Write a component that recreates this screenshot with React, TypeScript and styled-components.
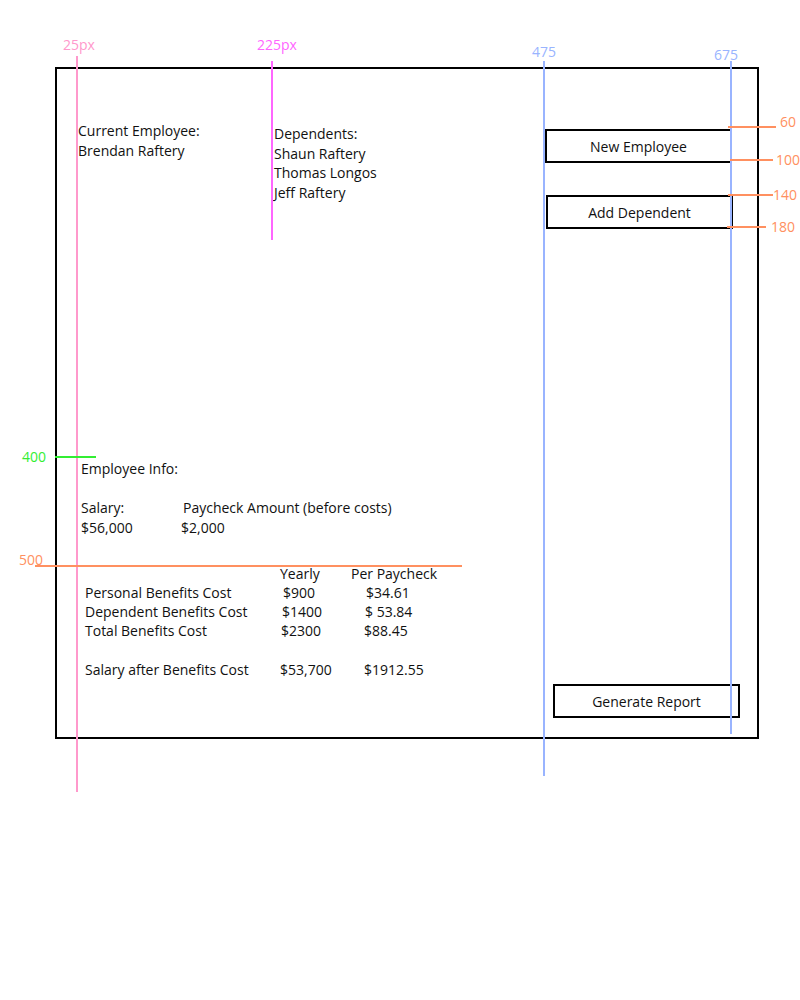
import React from 'react';
import styled, { createGlobalStyle } from 'styled-components';

const GlobalStyle = createGlobalStyle`
  html, body {
    margin: 0;
    padding: 0;
    background: #ffffff;
  }
  body {
    font-family: "Open Sans", "Noto Sans", sans-serif;
    font-size: 14px;
    color: #111111;
  }
`;

const Page = styled.div`
  position: relative;
  width: 800px;
  height: 1000px;
  padding: 67px 0 0 55px;
  box-sizing: border-box;
`;

const Frame = styled.div`
  width: 704px;
  height: 672px;
  box-sizing: border-box;
  border: 2px solid #000;
  display: flex;
`;

const LeftArea = styled.div`
  flex: 1;
  display: flex;
  flex-direction: column;
  line-height: 19.5px;
`;

const TopRow = styled.div`
  display: flex;
  padding: 52px 0 0 21px;
  height: 290px;
`;

const TextBlock = styled.div<{ $width?: number; $offset?: number }>`
  width: ${(p) => (p.$width ? `${p.$width}px` : 'auto')};
  margin-top: ${(p) => p.$offset ?? 0}px;
  white-space: nowrap;
`;

const InfoSection = styled.div`
  padding: 48px 0 0 24px;
`;

const Spacer = styled.div<{ $h: number }>`
  height: ${(p) => p.$h}px;
`;

const SalaryGrid = styled.div`
  display: grid;
  grid-template-columns: 100px auto;
  white-space: nowrap;
`;

const CostTable = styled.div`
  display: grid;
  grid-template-columns: 195px 71px auto;
  padding: 27px 0 0 28px;
  line-height: 19px;
  white-space: nowrap;
`;

const Cell = styled.div<{ $indent?: number }>`
  padding-left: ${(p) => p.$indent ?? 0}px;
`;

const RightColumn = styled.div`
  width: 212px;
  display: flex;
  flex-direction: column;
  padding: 60px 0 19px 0;
  box-sizing: border-box;
`;

const ActionButton = styled.button<{ $shift?: number }>`
  width: 187px;
  height: 34px;
  margin-left: ${(p) => p.$shift ?? 0}px;
  border: 2px solid #000;
  background: #fff;
  font-family: "Open Sans", "Noto Sans", sans-serif;
  font-size: 14px;
  color: #111;
  padding: 0;
  box-sizing: border-box;
  cursor: pointer;
`;

const ButtonGap = styled.div<{ $h: number }>`
  height: ${(p) => p.$h}px;
`;

const Push = styled.div`
  flex: 1;
`;

/* annotation overlay: guide lines and their labels */
const VGuide = styled.div<{ $x: number; $y: number; $len: number; $color: string }>`
  position: absolute;
  left: ${(p) => p.$x}px;
  top: ${(p) => p.$y}px;
  width: 2px;
  height: ${(p) => p.$len}px;
  background: ${(p) => p.$color};
`;

const HGuide = styled.div<{ $x: number; $y: number; $len: number; $color: string }>`
  position: absolute;
  left: ${(p) => p.$x}px;
  top: ${(p) => p.$y}px;
  height: 2px;
  width: ${(p) => p.$len}px;
  background: ${(p) => p.$color};
`;

const GuideLabel = styled.span<{ $x: number; $y: number; $color: string }>`
  position: absolute;
  left: ${(p) => p.$x}px;
  top: ${(p) => p.$y}px;
  color: ${(p) => p.$color};
  font-family: "Open Sans", "Noto Sans", sans-serif;
  font-size: 14px;
  line-height: 16px;
`;

const PINK = '#ff99cc';
const MAGENTA = '#ff66ff';
const BLUE = '#99b4ff';
const ORANGE = '#ff9060';
const GREEN = '#33ee33';

const costRows = [
  { label: 'Personal Benefits Cost', yearly: '$900', yi: 3, paycheck: '$34.61', pi: 15 },
  { label: 'Dependent Benefits Cost', yearly: '$1400', yi: 2, paycheck: '$ 53.84', pi: 14 },
  { label: 'Total Benefits Cost', yearly: '$2300', yi: 1, paycheck: '$88.45', pi: 13 },
];

const Guides = (): JSX.Element => (
  <>
    <GuideLabel $x={63} $y={37} $color={PINK}>25px</GuideLabel>
    <VGuide $x={76} $y={56} $len={736} $color={PINK} />
    <GuideLabel $x={257} $y={37} $color={MAGENTA}>225px</GuideLabel>
    <VGuide $x={271} $y={61} $len={179} $color={MAGENTA} />
    <GuideLabel $x={532} $y={44} $color={BLUE}>475</GuideLabel>
    <VGuide $x={543} $y={61} $len={715} $color={BLUE} />
    <GuideLabel $x={714} $y={47} $color={BLUE}>675</GuideLabel>
    <VGuide $x={730} $y={61} $len={673} $color={BLUE} />

    <HGuide $x={728} $y={126} $len={48} $color={ORANGE} />
    <GuideLabel $x={780} $y={114} $color={ORANGE}>60</GuideLabel>
    <HGuide $x={730} $y={159} $len={43} $color={ORANGE} />
    <GuideLabel $x={776} $y={152} $color={ORANGE}>100</GuideLabel>
    <HGuide $x={728} $y={194} $len={45} $color={ORANGE} />
    <GuideLabel $x={773} $y={187} $color={ORANGE}>140</GuideLabel>
    <HGuide $x={727} $y={226} $len={39} $color={ORANGE} />
    <GuideLabel $x={771} $y={219} $color={ORANGE}>180</GuideLabel>

    <HGuide $x={55} $y={456} $len={41} $color={GREEN} />
    <GuideLabel $x={22} $y={449} $color={GREEN}>400</GuideLabel>
    <HGuide $x={35} $y={565} $len={427} $color={ORANGE} />
    <GuideLabel $x={19} $y={552} $color={ORANGE}>500</GuideLabel>
  </>
);

const App = (): JSX.Element => (
  <>
    <GlobalStyle />
    <Page>
      <Frame>
        <LeftArea>
          <TopRow>
            <TextBlock $width={196}>
              <div>Current Employee:</div>
              <div>Brendan Raftery</div>
            </TextBlock>
            <TextBlock $offset={3}>
              <div>Dependents:</div>
              <div>Shaun Raftery</div>
              <div>Thomas Longos</div>
              <div>Jeff Raftery</div>
            </TextBlock>
          </TopRow>

          <InfoSection>
            <div>Employee Info:</div>
            <Spacer $h={19.5} />
            <SalaryGrid>
              <Cell>Salary:</Cell>
              <Cell $indent={2}>Paycheck Amount (before costs)</Cell>
              <Cell>$56,000</Cell>
              <Cell>$2,000</Cell>
            </SalaryGrid>
          </InfoSection>

          <CostTable>
            <Cell />
            <Cell>Yearly</Cell>
            <Cell>Per Paycheck</Cell>
            {costRows.map((r) => (
              <React.Fragment key={r.label}>
                <Cell>{r.label}</Cell>
                <Cell $indent={r.yi}>{r.yearly}</Cell>
                <Cell $indent={r.pi}>{r.paycheck}</Cell>
              </React.Fragment>
            ))}
            <Spacer $h={20} />
            <Spacer $h={20} />
            <Spacer $h={20} />
            <Cell>Salary after Benefits Cost</Cell>
            <Cell $indent={-1}>$53,700</Cell>
            <Cell $indent={13}>$1912.55</Cell>
          </CostTable>
        </LeftArea>

        <RightColumn>
          <ActionButton>New Employee</ActionButton>
          <ButtonGap $h={32} />
          <ActionButton $shift={1}>Add Dependent</ActionButton>
          <Push />
          <ActionButton $shift={8}>Generate Report</ActionButton>
        </RightColumn>
      </Frame>
      <Guides />
    </Page>
  </>
);

export default App;
